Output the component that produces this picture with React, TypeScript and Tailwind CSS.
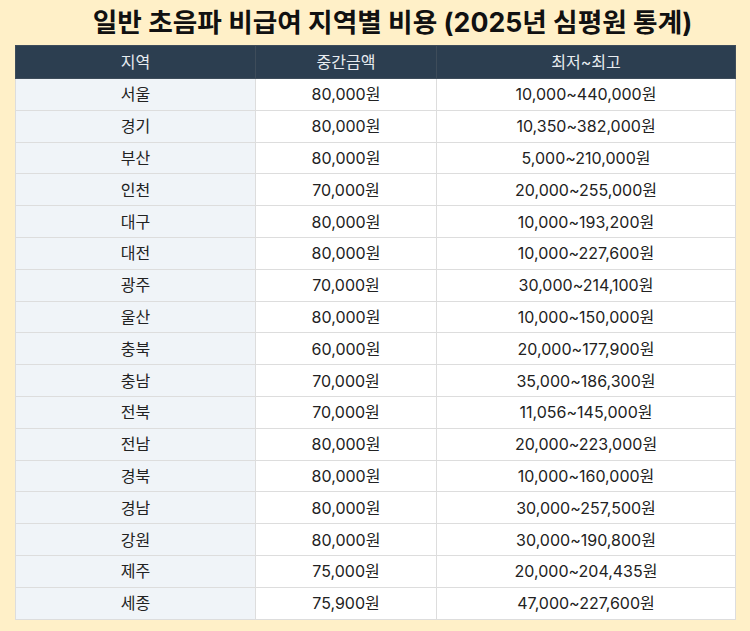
const rows = [
  ["서울", "80,000원", "10,000~440,000원"],
  ["경기", "80,000원", "10,350~382,000원"],
  ["부산", "80,000원", "5,000~210,000원"],
  ["인천", "70,000원", "20,000~255,000원"],
  ["대구", "80,000원", "10,000~193,200원"],
  ["대전", "80,000원", "10,000~227,600원"],
  ["광주", "70,000원", "30,000~214,100원"],
  ["울산", "80,000원", "10,000~150,000원"],
  ["충북", "60,000원", "20,000~177,900원"],
  ["충남", "70,000원", "35,000~186,300원"],
  ["전북", "70,000원", "11,056~145,000원"],
  ["전남", "80,000원", "20,000~223,000원"],
  ["경북", "80,000원", "10,000~160,000원"],
  ["경남", "80,000원", "30,000~257,500원"],
  ["강원", "80,000원", "30,000~190,800원"],
  ["제주", "75,000원", "20,000~204,435원"],
  ["세종", "75,900원", "47,000~227,600원"],
];

export default function App() {
  return (
    <div className="w-[750px] h-[631px] bg-[#fff0c8] px-[15px] pt-[4px] font-['Inter','Noto_Sans_CJK_KR',sans-serif]">
      <h1 className="text-center pl-[35px] text-[26.7px] leading-[36px] font-bold text-[#111] mb-[5px]">
        일반 초음파 비급여 지역별 비용 (2025년 심평원 통계)
      </h1>
      <table className="w-[720px] border-collapse text-[16px] text-[#222] table-fixed">
        <colgroup>
          <col className="w-[240px]" />
          <col className="w-[181px]" />
          <col className="w-[299px]" />
        </colgroup>
        <thead>
          <tr className="h-[33px] bg-[#2c3e50] text-[#e8ecf0]">
            <th className="font-normal border border-[#3e4c5a] text-center">지역</th>
            <th className="font-normal border border-[#3e4c5a] text-center">중간금액</th>
            <th className="font-normal border border-[#3e4c5a] text-center">최저~최고</th>
          </tr>
        </thead>
        <tbody>
          {rows.map((r) => (
            <tr key={r[0]} className="h-[31.8px]">
              <td className="bg-[#f0f4f8] border border-[#dddddd] text-center">{r[0]}</td>
              <td className="bg-white border border-[#dddddd] text-center">{r[1]}</td>
              <td className="bg-white border border-[#dddddd] text-center">{r[2]}</td>
            </tr>
          ))}
        </tbody>
      </table>
    </div>
  );
}
